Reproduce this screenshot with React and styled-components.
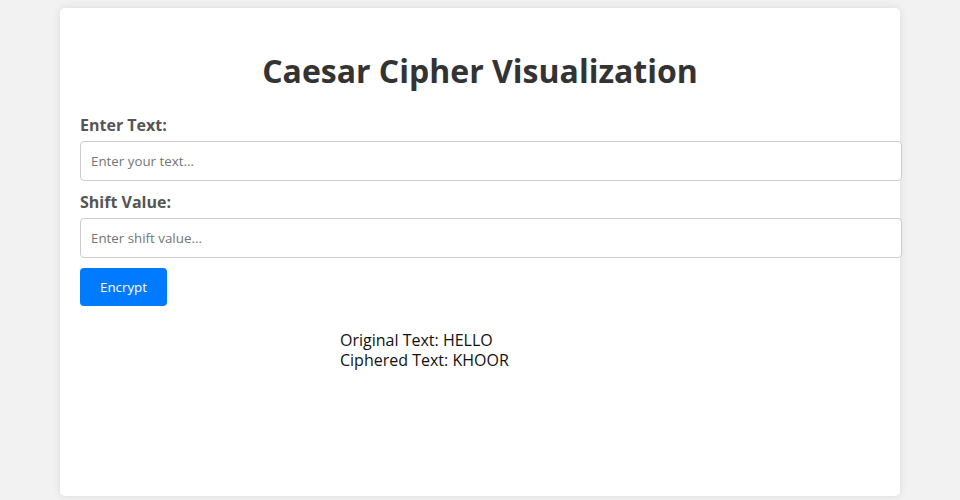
import React, { useState } from 'react';
import styled, { createGlobalStyle } from 'styled-components';

const GlobalStyle = createGlobalStyle`
  body {
    margin: 0;
    background: #f2f2f2;
    font-family: "Open Sans", "Noto Sans", sans-serif;
  }
`;

const Page = styled.div`
  padding: 8px 60px 4px;
`;

const Card = styled.div`
  background: #fff;
  border-radius: 5px;
  box-shadow: 0 0 10px rgba(0, 0, 0, 0.1);
  padding: 20px;
  height: 448px;
`;

const Title = styled.h1`
  font-size: 32px;
  font-weight: 700;
  color: #333;
  text-align: center;
  margin: 21px 0 22px;
`;

const Label = styled.label`
  display: block;
  font-size: 16px;
  font-weight: 700;
  color: #555;
  margin-bottom: 5px;
`;

const Input = styled.input`
  display: block;
  width: 100%;
  box-sizing: content-box;
  height: 18px;
  padding: 10px;
  margin-bottom: 10px;
  border: 1px solid #ccc;
  border-radius: 4px;
  font-family: inherit;
  font-size: 13.33px;
  color: #333;
  &::placeholder {
    color: #757575;
  }
`;

const Button = styled.button`
  background: #007bff;
  color: #fff;
  border: none;
  border-radius: 4px;
  padding: 10px 20px;
  height: 38px;
  font-family: inherit;
  font-size: 13.33px;
  cursor: pointer;
`;

const Result = styled.div`
  margin: 24px 0 0 260px;
  font-size: 16px;
  line-height: 20px;
  color: #111;
`;

function caesar(text, shift) {
  return text.replace(/[a-z]/gi, (ch) => {
    const base = ch <= 'Z' ? 65 : 97;
    return String.fromCharCode(((ch.charCodeAt(0) - base + shift) % 26 + 26) % 26 + base);
  });
}

export default function App() {
  const [text, setText] = useState('');
  const [shift, setShift] = useState('');
  const [result, setResult] = useState({ original: 'HELLO', ciphered: 'KHOOR' });

  const handleEncrypt = () => {
    const n = parseInt(shift, 10) || 0;
    setResult({ original: text, ciphered: caesar(text, n) });
  };

  return (
    <Page>
      <GlobalStyle />
      <Card>
        <Title>Caesar Cipher Visualization</Title>
        <Label>Enter Text:</Label>
        <Input
          placeholder="Enter your text..."
          value={text}
          onChange={(e) => setText(e.target.value)}
        />
        <Label>Shift Value:</Label>
        <Input
          placeholder="Enter shift value..."
          value={shift}
          onChange={(e) => setShift(e.target.value)}
        />
        <Button onClick={handleEncrypt}>Encrypt</Button>
        <Result>
          <div>Original Text: {result.original}</div>
          <div>Ciphered Text: {result.ciphered}</div>
        </Result>
      </Card>
    </Page>
  );
}
